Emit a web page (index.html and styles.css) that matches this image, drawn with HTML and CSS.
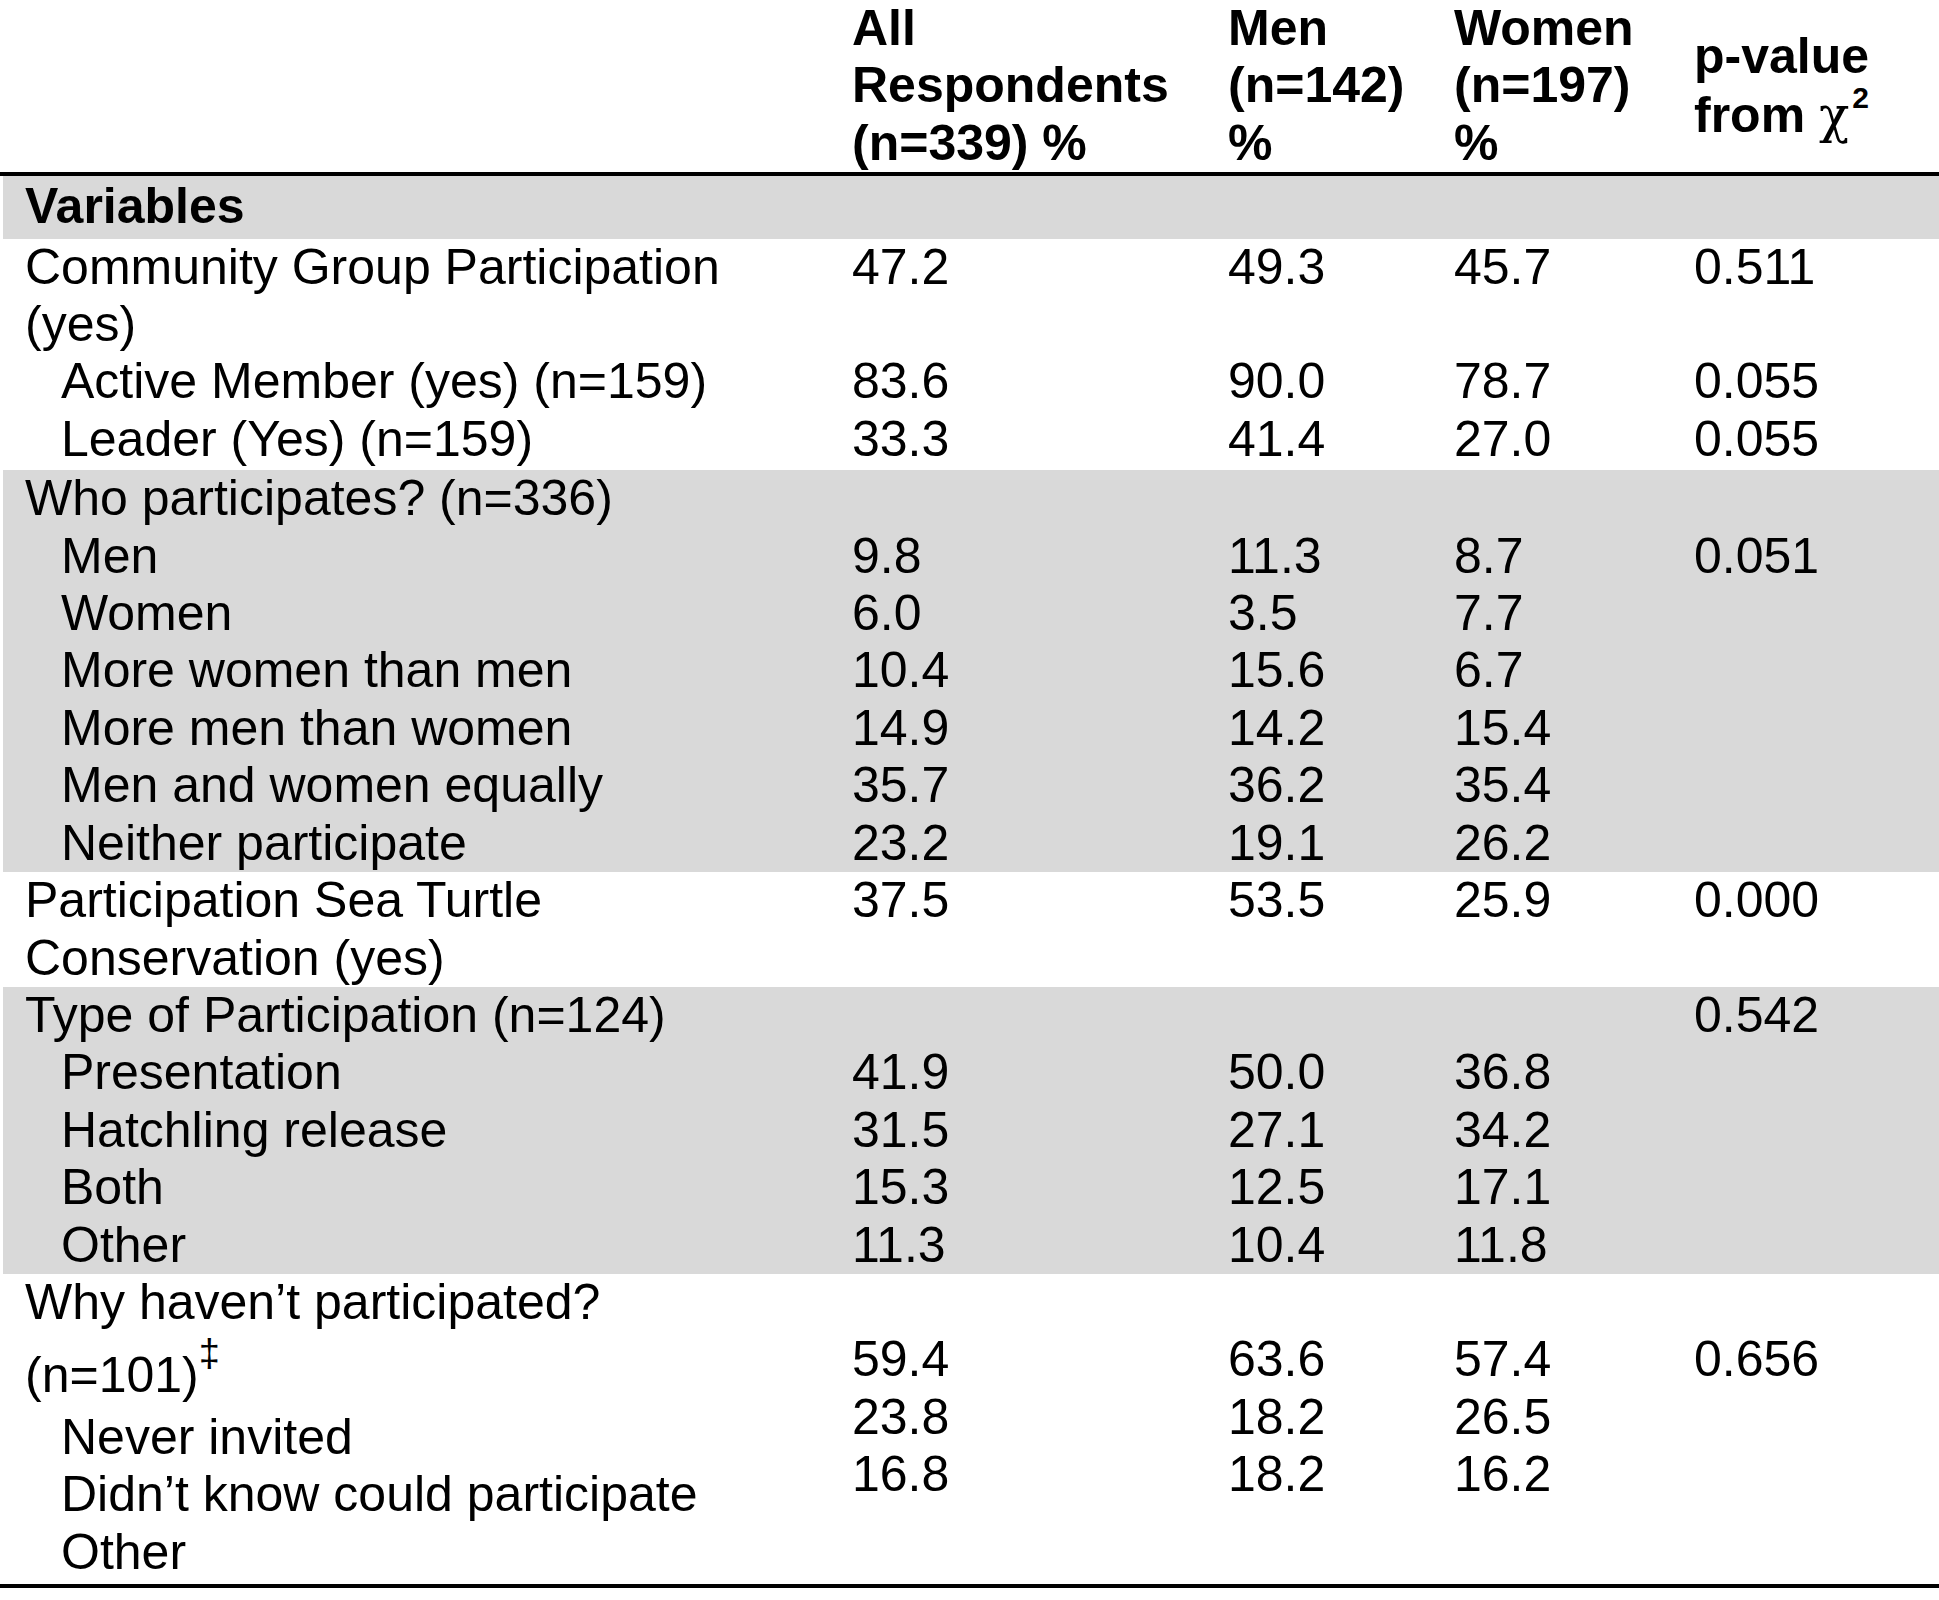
FILE: index.html
```html
<!DOCTYPE html>
<html lang="en">
<head>
<meta charset="utf-8">
<title>Participation by gender</title>
<link rel="stylesheet" href="styles.css">
</head>
<body>
<table class="stats">
  <colgroup>
    <col class="c-var">
    <col class="c-all">
    <col class="c-men">
    <col class="c-women">
    <col class="c-p">
  </colgroup>
  <thead>
    <tr>
      <th class="first"></th>
      <th>All Respondents (n=339) %</th>
      <th>Men (n=142) %</th>
      <th>Women (n=197) %</th>
      <th class="pv">p-value from <span class="chi">χ</span><sup class="sq">2</sup></th>
    </tr>
  </thead>
  <tbody>
    <tr class="shade head-row">
      <td class="first"><b>Variables</b></td>
      <td></td><td></td><td></td><td></td>
    </tr>
    <tr class="grp1">
      <td class="first">
        <div>Community Group Participation (yes)</div>
        <div class="ind">Active Member (yes) (n=159)</div>
        <div class="ind">Leader (Yes) (n=159)</div>
      </td>
      <td>47.2<br><br>83.6<br>33.3</td>
      <td>49.3<br><br>90.0<br>41.4</td>
      <td>45.7<br><br>78.7<br>27.0</td>
      <td>0.511<br><br>0.055<br>0.055</td>
    </tr>
    <tr class="shade">
      <td class="first">
        <div>Who participates? (n=336)</div>
        <div class="ind">Men</div>
        <div class="ind">Women</div>
        <div class="ind">More women than men</div>
        <div class="ind">More men than women</div>
        <div class="ind">Men and women equally</div>
        <div class="ind">Neither participate</div>
      </td>
      <td><br>9.8<br>6.0<br>10.4<br>14.9<br>35.7<br>23.2</td>
      <td><br>11.3<br>3.5<br>15.6<br>14.2<br>36.2<br>19.1</td>
      <td><br>8.7<br>7.7<br>6.7<br>15.4<br>35.4<br>26.2</td>
      <td><br>0.051</td>
    </tr>
    <tr>
      <td class="first"><div>Participation Sea Turtle Conservation (yes)</div></td>
      <td>37.5</td>
      <td>53.5</td>
      <td>25.9</td>
      <td>0.000</td>
    </tr>
    <tr class="shade">
      <td class="first">
        <div>Type of Participation (n=124)</div>
        <div class="ind">Presentation</div>
        <div class="ind">Hatchling release</div>
        <div class="ind">Both</div>
        <div class="ind">Other</div>
      </td>
      <td><br>41.9<br>31.5<br>15.3<br>11.3</td>
      <td><br>50.0<br>27.1<br>12.5<br>10.4</td>
      <td><br>36.8<br>34.2<br>17.1<br>11.8</td>
      <td>0.542</td>
    </tr>
    <tr class="last">
      <td class="first">
        <div class="q">Why haven’t participated? (n=101)<sup class="dd">‡</sup></div>
        <div class="ind">Never invited</div>
        <div class="ind">Didn’t know could participate</div>
        <div class="ind">Other</div>
      </td>
      <td><br>59.4<br>23.8<br>16.8</td>
      <td><br>63.6<br>18.2<br>18.2</td>
      <td><br>57.4<br>26.5<br>16.2</td>
      <td><br>0.656</td>
    </tr>
  </tbody>
</table>
</body>
</html>
```
FILE: styles.css
```css
html, body {
  margin: 0;
  padding: 0;
  background: #ffffff;
}

.stats {
  width: 1939px;
  table-layout: fixed;
  border-collapse: separate;
  border-spacing: 0;
  font-family: "Liberation Sans", Arial, sans-serif;
  font-size: 50px;
  line-height: 57.4px;
  color: #000;
}

.c-var { width: 852px; }
.c-all { width: 376px; }
.c-men { width: 226px; }
.c-women { width: 240px; }
.c-p { width: 245px; }

.stats th,
.stats td {
  padding: 0 10px 0 0;
  text-align: left;
  vertical-align: top;
}

.stats th {
  font-weight: bold;
  vertical-align: middle;
  border-bottom: 4px solid #000;
}

.stats .first {
  padding-left: 25px;
  padding-right: 90px;
}

.stats .ind {
  padding-left: 36px;
}

.stats .shade td {
  background: #d9d9d9;
}

.stats .shade td.first {
  background: linear-gradient(90deg, #ffffff 0 3px, #d9d9d9 3px);
}

.stats .head-row td {
  padding-top: 2px;
  padding-bottom: 3px;
}

.stats .grp1 td {
  padding-bottom: 2px;
}

.stats .last td {
  padding-bottom: 3px;
  border-bottom: 4px solid #000;
}

.chi {
  font-family: "DejaVu Serif", "Liberation Serif", serif;
  font-weight: normal;
  font-size: 50px;
  line-height: 50px;
}

.sq {
  font-size: 30px;
  line-height: 26px;
  vertical-align: 24px;
  margin-left: 3px;
}

.q {
  margin-bottom: 4px;
}

.dd {
  font-size: 38px;
  line-height: 45px;
  vertical-align: 26px;
}
```
